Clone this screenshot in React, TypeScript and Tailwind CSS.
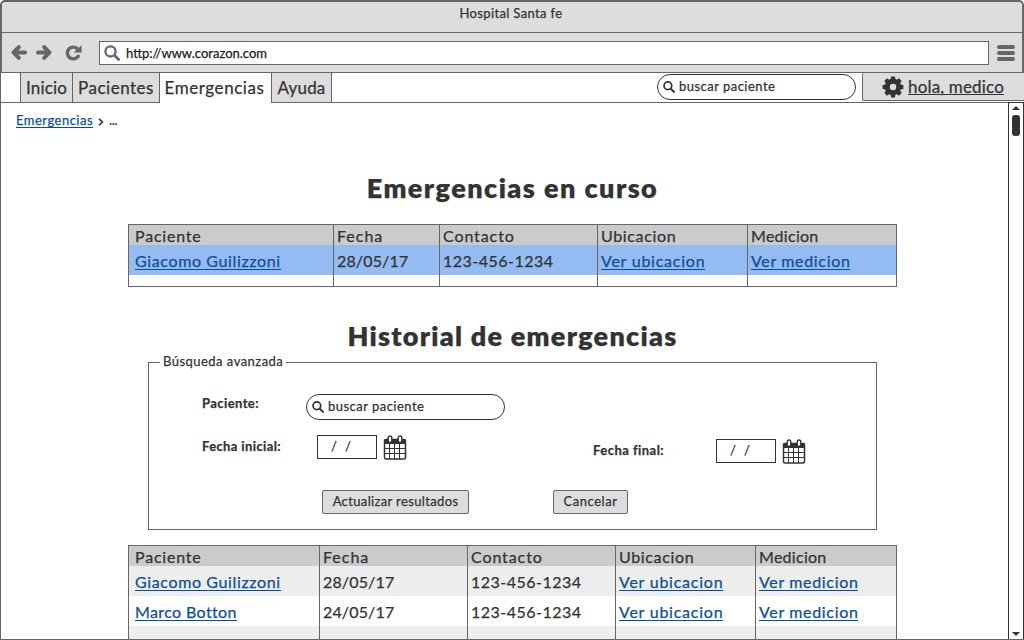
import type { ReactNode } from "react";
import { clsx } from "clsx";

type SvgProps = { className?: string };

function ArrowLeft({ className }: SvgProps) {
  return (
    <svg viewBox="0 0 16 15" className={clsx("shrink-0", className)} fill="none" stroke="currentColor" strokeLinejoin="round">
      <path d="M7.8 2.2 2.600 7.500 7.800 12.800" strokeWidth="4" strokeLinecap="round" />
      <path d="M3 7.500H14" strokeWidth="4" strokeLinecap="round" />
    </svg>
  );
}

function Reload({ className }: SvgProps) {
  return (
    <svg viewBox="0 0 17 16" className={clsx("shrink-0", className)}>
      <path d="M13.2 11.200A5.900 5.900 0 1 1 12.600 4" fill="none" stroke="currentColor" strokeWidth="3.400" strokeLinecap="round" />
      <path d="M16.300 .8V7.300H9.200Z" fill="currentColor" stroke="currentColor" strokeWidth=".5" strokeLinejoin="round" />
    </svg>
  );
}

function Magnifier({ className }: SvgProps) {
  return (
    <svg viewBox="0 0 16 16" className={clsx("shrink-0", className)} fill="none" stroke="currentColor" strokeLinecap="round">
      <circle cx="6.5" cy="6.4" r="5.1" strokeWidth="2.3" />
      <path d="m10.6 10.5 4 4" strokeWidth="2.8" />
    </svg>
  );
}

function Gear({ className }: SvgProps) {
  return (
    <svg viewBox="-11 -11 22 22" className={clsx("shrink-0", className)} fill="currentColor">
      <circle r="5.7" fill="none" stroke="currentColor" strokeWidth="5" />
      {[0, 45, 90, 135, 180, 225, 270, 315].map((a) => (
        <path key={a} d="M-2.6-7 L-1.9-10.4 H1.9 L2.6-7Z" transform={`rotate(${a})`} />
      ))}
    </svg>
  );
}

function Calendar({ className }: SvgProps) {
  return (
    <svg viewBox="0 0 24 25" className={clsx("shrink-0 text-[#333]", className)}>
      <rect x="1.5" y="4.5" width="21" height="19.5" rx="1.5" fill="#fff" stroke="currentColor" strokeWidth="1.5" />
      <path d="M1 5.5A1.5 1.5 0 0 1 2.500 4H21.500A1.5 1.5 0 0 1 23 5.500V9H1Z" fill="currentColor" />
      <path d="M6.500 9V24M11.500 9V24M16.500 9V24M2 13.500H22M2 18.500H22" stroke="currentColor" strokeWidth="1" />
      <rect x="5.200" y="1" width="3.600" height="6.500" rx="1.800" fill="#fff" stroke="currentColor" strokeWidth="1.400" />
      <rect x="15.200" y="1" width="3.600" height="6.500" rx="1.800" fill="#fff" stroke="currentColor" strokeWidth="1.400" />
    </svg>
  );
}

function SearchPill() {
  return (
    <div className="flex h-[26px] w-[199px] items-center rounded-full border border-[#333] bg-white pb-px pl-[5px] text-[13px] tracking-[0.48px]">
      <Magnifier className="mt-px mr-1 size-3" />
      buscar paciente
    </div>
  );
}

const tabs = [
  { label: "Inicio", width: "w-[52px]", tracking: "tracking-[0.16px]" },
  { label: "Pacientes", width: "w-[87px]", tracking: "tracking-[0.5px]" },
  { label: "Emergencias", width: "w-[112px] pr-0.5", tracking: "tracking-[0.57px]", active: true },
  { label: "Ayuda", width: "w-[61px]", tracking: "tracking-[0.2px]" },
];

function Link({ children, className }: { children: ReactNode; className?: string }) {
  return <a className={clsx("inline-block border-b", className ?? "")}>{children}</a>;
}

const blueLink = "border-[#004f98] text-[#0f4f94]";

function Cell({ children, first, className }: { children?: ReactNode; first?: boolean; className?: string }) {
  return (
    <div className={clsx("text-base leading-4 whitespace-nowrap", first ? "pl-1.5" : "border-l border-[#666] pl-[3px]", className)}>
      {children}
    </div>
  );
}

const headers = [
  ["Paciente", "tracking-[0.8px]"],
  ["Fecha", "tracking-[1px]"],
  ["Contacto", "tracking-[0.9px]"],
  ["Ubicacion", "tracking-[0.64px]"],
  ["Medicion", "tracking-[0.28px]"],
];

type Row = { name: string; date: string; nameTracking: string; bg: string };

function Grid({ columns, rows, tail, className }: { columns: string; rows: Row[]; tail: string; className?: string }) {
  return (
    <div className={clsx("w-[769px] border border-[#666]", className)}>
      <div className={clsx("grid h-5 bg-[#cbcbcb]", columns)}>
        {headers.map(([label, tracking], i) => (
          <Cell key={label} first={i === 0} className={clsx("pt-[3px]", tracking)}>{label}</Cell>
        ))}
      </div>
      {rows.map((r) => (
        <div key={r.name} className={clsx("grid h-[30px]", columns, r.bg)}>
          <Cell first className="pt-2"><Link className={clsx(blueLink, r.nameTracking)}>{r.name}</Link></Cell>
          <Cell className="pt-2 tracking-[0.15px]">{r.date}</Cell>
          <Cell className="pt-2 tracking-[0.48px]">123-456-1234</Cell>
          <Cell className="pt-2 tracking-[0.76px]"><Link className={blueLink}>Ver ubicacion</Link></Cell>
          <Cell className="pt-2 tracking-[0.66px]"><Link className={blueLink}>Ver medicion</Link></Cell>
        </div>
      ))}
      <div className={clsx("grid", columns, tail)}>
        {headers.map(([label], i) => <Cell key={label} first={i === 0} />)}
      </div>
    </div>
  );
}

function DateField() {
  return (
    <div className="flex items-start gap-1.5">
      <div className="flex h-6 w-[60px] items-center gap-2 border border-[#333] bg-white pb-px pl-[13px] text-[13px]">
        <span>/</span>
        <span>/</span>
      </div>
      <Calendar className="h-[25px] w-6" />
    </div>
  );
}

function Button({ children, className }: { children: ReactNode; className?: string }) {
  return (
    <button className={clsx("flex h-6 items-center justify-center rounded-[2px] border border-[#666] bg-[#ddd] pb-px text-[13px] [-webkit-text-stroke:0.25px]", className)}>
      {children}
    </button>
  );
}

export default function App() {
  return (
    <div className="flex h-[640px] w-[1024px] flex-col overflow-hidden bg-white font-['Lato',sans-serif] text-[#333] [-webkit-text-stroke:0.25px]">
      <header className="flex h-[73px] shrink-0 flex-col rounded-t-[5px] border-x-2 border-t-2 border-b border-[#666] bg-[#ddd]">
        <div className="flex h-[31px] shrink-0 justify-center border-b border-[#666] pt-[3px] pr-0.5 text-[13px] leading-4 tracking-[0.36px]">
          Hospital Santa fe
        </div>
        <div className="flex flex-1 items-center pl-[9px] text-[#666]">
          <ArrowLeft className="h-[15px] w-4" />
          <ArrowLeft className="ml-[9px] h-[15px] w-4 -scale-x-100" />
          <Reload className="ml-[13px] h-4 w-[17px]" />
          <div className="ml-[17px] flex h-6 w-[890px] items-center border border-[#666] bg-white pl-1">
            <Magnifier className="mr-1.5 size-4" />
            <span className="pt-0.5 text-[13px] text-[#222]">http://www.corazon.com</span>
          </div>
          <div className="ml-2 flex flex-col gap-0.5">
            <i className="h-1 w-[18px] rounded-full bg-[#666]" />
            <i className="h-1 w-[18px] rounded-full bg-[#666]" />
            <i className="h-1 w-[18px] rounded-full bg-[#666]" />
          </div>
        </div>
      </header>

      <nav className="flex h-[30px] shrink-0 border-l border-[#666]">
        <div className="w-[19px] border-b border-[#666]" />
        {tabs.map((t) => (
          <div
            key={t.label}
            className={clsx(
              "flex items-start justify-center border-l border-[#666] pt-[5px] text-[17px] leading-5",
              t.active ? "bg-white" : "border-b bg-[#ddd]",
              t.label === "Ayuda" && "border-r",
              t.width,
              t.tracking,
            )}
          >
            {t.label}
          </div>
        ))}
        <div className="flex flex-1 items-start justify-end border-b border-[#666]">
          <div className="mt-px mr-1.5"><SearchPill /></div>
          <div className="flex h-7 w-[162px] rounded-l-[2px] border-b border-l border-[#666] bg-[#ddd] pt-1 pl-[19px]">
            <Gear className="-mt-px mr-1 size-[22px]" />
            <Link className="h-[18px] border-[#333] text-[17px] leading-[19px] tracking-[0.17px]">hola, medico</Link>
          </div>
        </div>
      </nav>

      <div className="flex min-h-0 flex-1 border-b border-l border-[#666]">
        <main className="min-w-0 flex-1 overflow-hidden">
          <div className="flex h-[25px] items-end pl-[15px] text-[13px] leading-[14px]">
            <Link className={clsx(blueLink, "tracking-[0.49px]")}>Emergencias</Link>
            <svg viewBox="0 0 6 8" className="mb-0.5 ml-[5px] h-2 w-1.5" fill="none" stroke="#333" strokeWidth="1.6">
              <path d="m1 .8 3.500 3.200L1 7.200" />
            </svg>
            <span className="mb-px ml-[5px] tracking-[-0.3px]">...</span>
          </div>

          <div className="ml-[127px] w-[769px]">
            <h1 className="mt-11 text-center text-[27px] leading-8 font-extrabold tracking-[1.45px]">Emergencias en curso</h1>
            <Grid
              className="mt-5"
              columns="grid-cols-[204px_106px_158px_150px_149px]"
              rows={[{ name: "Giacomo Guilizzoni", date: "28/05/17", nameTracking: "tracking-[0.63px]", bg: "bg-[#94bbf2]" }]}
              tail="h-[11px]"
            />

            <h2 className="mt-[33px] text-center text-[27px] leading-8 font-extrabold tracking-[1.25px]">Historial de emergencias</h2>
            <fieldset className="ml-5 h-[178px] w-[729px] border border-[#666] text-[13px]">
              <legend className="ml-[11px] h-[21px] px-[3px] leading-[18px] tracking-[0.47px]">Búsqueda avanzada</legend>
              <div className="mt-[21px] flex items-start pl-[53px]">
                <span className="w-[104px] pt-px leading-4 font-bold tracking-[0.41px]">Paciente:</span>
                <SearchPill />
              </div>
              <div className="mt-[15px] flex items-start pl-[53px]">
                <span className="w-[115px] pt-[3px] leading-4 font-bold tracking-[0.38px]">Fecha inicial:</span>
                <DateField />
                <span className="mt-1 ml-[186px] w-[123px] pt-[3px] leading-4 font-bold tracking-[0.47px]">Fecha final:</span>
                <div className="mt-1"><DateField /></div>
              </div>
              <div className="mt-[26px] flex gap-[84px] pl-[173px]">
                <Button className="w-[147px] tracking-[0.36px]">Actualizar resultados</Button>
                <Button className="w-[75px] tracking-[0.55px]">Cancelar</Button>
              </div>
            </fieldset>

            <Grid
              className="mt-[15px]"
              columns="grid-cols-[190px_148px_148px_140px_141px]"
              rows={[
                { name: "Giacomo Guilizzoni", date: "28/05/17", nameTracking: "tracking-[0.63px]", bg: "bg-[#ededed]" },
                { name: "Marco Botton", date: "24/05/17", nameTracking: "tracking-[0.38px]", bg: "bg-white" },
              ]}
              tail="h-[30px] bg-[#ededed]"
            />
          </div>
        </main>

        <aside className="-mt-px flex w-4 flex-col items-center border border-b-0 border-[#333] bg-white pt-[3px] pb-[3px]">
          <svg viewBox="0 0 8 4" className="h-1 w-2" fill="#333"><path d="M4 0 8 4H0Z" /></svg>
          <div className="mt-[5px] h-[21px] w-2 rounded-[3px] bg-[#333]" />
          <svg viewBox="0 0 8 4" className="mt-auto h-1 w-2" fill="#333"><path d="M0 0H8L4 4Z" /></svg>
        </aside>
      </div>
    </div>
  );
}
